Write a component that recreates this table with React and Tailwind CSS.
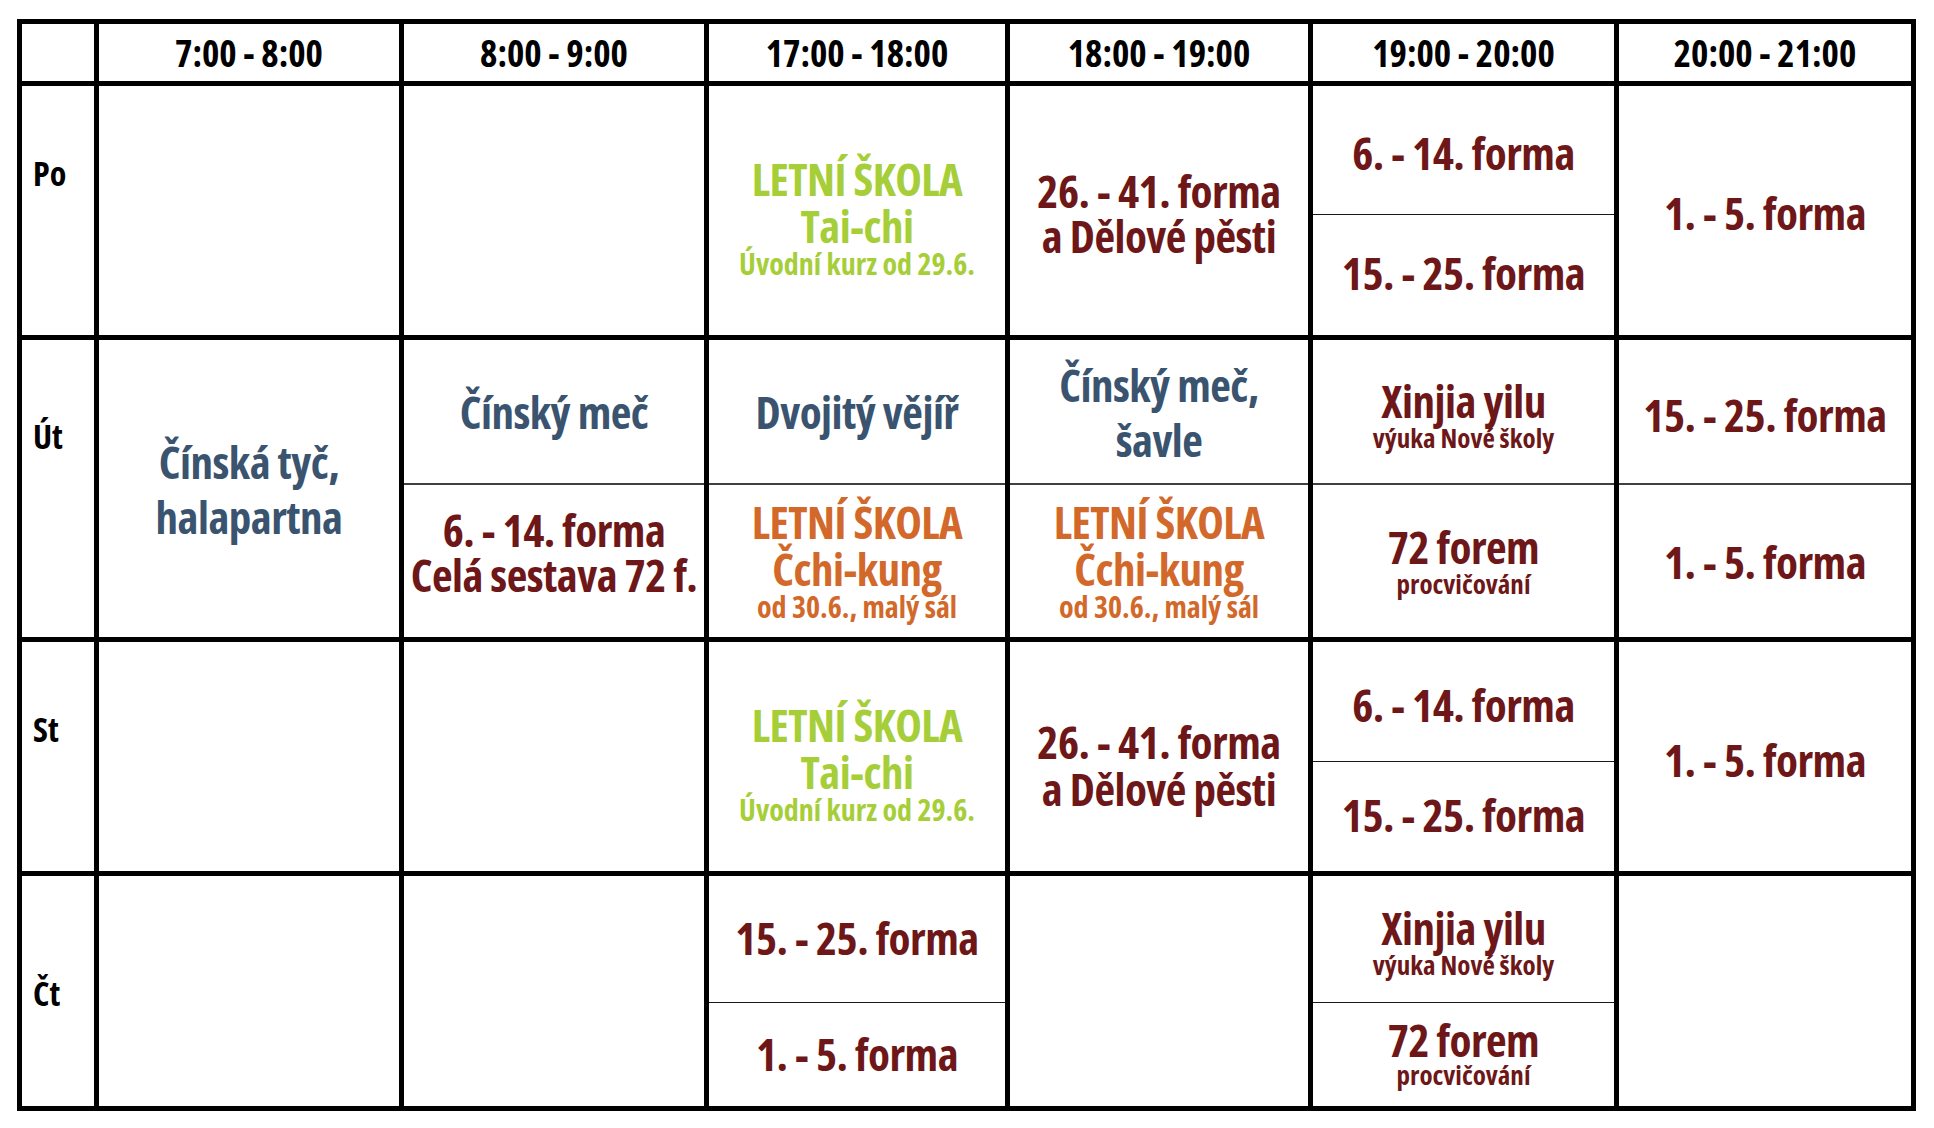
import React from 'react';

const maroon = 'text-[#6d1719]';
const slate = 'text-[#3a5470]';
const green = 'text-[#a6ce39]';
const orange = 'text-[#d2692a]';

const Big = ({ children, color = maroon }) => (
  <div className={`text-[45px] leading-none tracking-[-0.5px] ${color}`}>{children}</div>
);

const Cell = ({ children, className = '' }) => (
  <div className={`flex flex-col items-center justify-center bg-white text-center ${className}`}>
    {children}
  </div>
);

const Split = ({ top, bottom, topH, line = 'h-px bg-[#1a1a1a]' }) => (
  <div className="flex flex-col bg-white">
    <div className={`flex flex-col items-center justify-center text-center ${topH}`}>{top}</div>
    <div className={line} />
    <div className="flex flex-1 flex-col items-center justify-center text-center">{bottom}</div>
  </div>
);

const Summer = ({ color, title, note }) => (
  <div className={color}>
    <div className="text-[45px] leading-[47px] tracking-[-0.5px]">LETNÍ ŠKOLA</div>
    <div className="text-[45px] leading-[47px] tracking-[-0.5px]">{title}</div>
    <div className="text-[30px] leading-[30px]">{note}</div>
  </div>
);

const TwoLine = ({ a, b, color = maroon, lh = 'leading-[45px]' }) => (
  <div className={`text-[45px] tracking-[-0.5px] ${lh} ${color}`}>
    <div>{a}</div>
    <div>{b}</div>
  </div>
);

const WithNote = ({ title, note, lh = 'leading-[29px]' }) => (
  <div className={maroon}>
    <div className="text-[45px] leading-none tracking-[-0.5px]">{title}</div>
    <div className={`text-[27px] ${lh}`}>{note}</div>
  </div>
);

const Day = ({ label, pt }) => (
  <div className={`bg-white pl-[11px] text-[34px] leading-none text-black ${pt}`}>{label}</div>
);

const times = ['7:00 - 8:00', '8:00 - 9:00', '17:00 - 18:00', '18:00 - 19:00', '19:00 - 20:00', '20:00 - 21:00'];

const utLine = 'h-[2px] bg-[#404040]';

export default function App() {
  return (
    <div className="min-h-screen bg-white pl-[17px] pt-[19px] font-['Open_Sans',sans-serif] font-bold font-stretch-condensed">
      <div className="grid w-fit grid-cols-[72px_300px_300px_296px_298px_301px_292px] grid-rows-[57px_249px_297px_229px_230px] gap-[5px] border-[5px] border-black bg-black">
        {/* header */}
        <div className="bg-white" />
        {times.map((t) => (
          <Cell key={t} className="text-[37px] leading-none text-black">{t}</Cell>
        ))}

        {/* Po */}
        <Day label="Po" pt="pt-[70px]" />
        <div className="bg-white" />
        <div className="bg-white" />
        <Cell className="pt-[13px]">
          <Summer color={green} title="Tai-chi" note="Úvodní kurz od 29.6." />
        </Cell>
        <Cell className="pt-[5px]">
          <TwoLine a="26. - 41. forma" b="a Dělové pěsti" />
        </Cell>
        <Split
          topH="h-[128px]"
          top={<div className="pt-[5px]"><Big>6. - 14. forma</Big></div>}
          bottom={<div className="pb-[6px]"><Big>15. - 25. forma</Big></div>}
        />
        <Cell className="pt-[4px]"><Big>1. - 5. forma</Big></Cell>

        {/* Út */}
        <Day label="Út" pt="pt-[79px]" />
        <Cell>
          <TwoLine a="Čínská tyč," b="halapartna" color={slate} lh="leading-[55px]" />
        </Cell>
        <Split
          topH="h-[143px]"
          line={utLine}
          top={<Big color={slate}>Čínský meč</Big>}
          bottom={<div className="pb-[18px]"><TwoLine a="6. - 14. forma" b="Celá sestava 72 f." /></div>}
        />
        <Split
          topH="h-[143px]"
          line={utLine}
          top={<Big color={slate}>Dvojitý vějíř</Big>}
          bottom={<div className="pb-[3px]"><Summer color={orange} title="Čchi-kung" note="od 30.6., malý sál" /></div>}
        />
        <Split
          topH="h-[143px]"
          line={utLine}
          top={<TwoLine a="Čínský meč," b="šavle" color={slate} lh="leading-[55px]" />}
          bottom={<div className="pb-[3px]"><Summer color={orange} title="Čchi-kung" note="od 30.6., malý sál" /></div>}
        />
        <Split
          topH="h-[143px]"
          line={utLine}
          top={<div className="pt-[6px]"><WithNote title="Xinjia yilu" note="výuka Nové školy" /></div>}
          bottom={<WithNote title="72 forem" note="procvičování" />}
        />
        <Split
          topH="h-[143px]"
          line={utLine}
          top={<div className="pt-[5px]"><Big>15. - 25. forma</Big></div>}
          bottom={<Big>1. - 5. forma</Big>}
        />

        {/* St */}
        <Day label="St" pt="pt-[70px]" />
        <div className="bg-white" />
        <div className="bg-white" />
        <Cell className="pt-[12px]">
          <Summer color={green} title="Tai-chi" note="Úvodní kurz od 29.6." />
        </Cell>
        <Cell className="pt-[16px]">
          <TwoLine a="26. - 41. forma" b="a Dělové pěsti" lh="leading-[47px]" />
        </Cell>
        <Split
          topH="h-[119px]"
          top={<div className="pt-[5px]"><Big>6. - 14. forma</Big></div>}
          bottom={<div className="pb-[5px]"><Big>15. - 25. forma</Big></div>}
        />
        <Cell className="pt-[6px]"><Big>1. - 5. forma</Big></Cell>

        {/* Čt */}
        <Day label="Čt" pt="pt-[100px]" />
        <div className="bg-white" />
        <div className="bg-white" />
        <Split
          topH="h-[126px]"
          top={<div className="pb-[4px]"><Big>15. - 25. forma</Big></div>}
          bottom={<div className="pb-[3px]"><Big>1. - 5. forma</Big></div>}
        />
        <div className="bg-white" />
        <Split
          topH="h-[126px]"
          top={<div className="pt-[5px]"><WithNote title="Xinjia yilu" note="výuka Nové školy" /></div>}
          bottom={<div className="pb-[4px]"><WithNote title="72 forem" note="procvičování" lh="leading-[26px]" /></div>}
        />
        <div className="bg-white" />
      </div>
    </div>
  );
}
